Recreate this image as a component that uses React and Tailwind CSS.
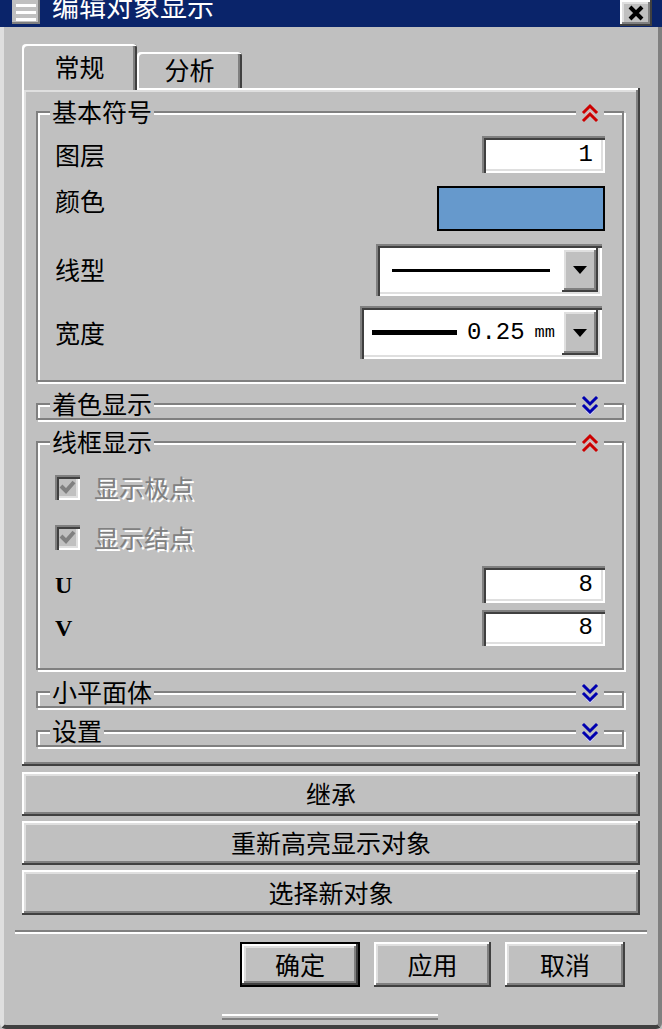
import React from 'react';

const cjk = "font-['Noto_Sans_CJK_SC','Noto_Sans_CJK_JP',sans-serif]";
const mono = "font-['Liberation_Mono','DejaVu_Sans_Mono',monospace]";
const serif = "font-['Liberation_Serif',serif]";

const raised =
  'bg-[#c0c0c0] shadow-[inset_-2px_-2px_0_#404040,inset_2px_2px_0_#ffffff,inset_-4px_-4px_0_#808080,inset_4px_4px_0_#dfdfdf]';
const sunken =
  'shadow-[inset_2px_2px_0_#808080,inset_4px_4px_0_#404040,inset_-2px_-2px_0_#ffffff,inset_-4px_-4px_0_#dfdfdf]';

const Chevrons = ({ up }) => (
  <svg width="20" height="22" viewBox="0 0 20 22">
    {up ? (
      <g fill="none" strokeWidth="3" strokeLinecap="square">
        <polyline points="4,10 10,4 16,10" stroke="#cc0000" />
        <polyline points="4,18 10,12 16,18" stroke="#cc0000" />
        <polyline points="6,13 10,9 14,13" stroke="#ffb0b0" strokeWidth="1" />
      </g>
    ) : (
      <g fill="none" strokeWidth="3" strokeLinecap="square">
        <polyline points="4,4 10,10 16,4" stroke="#0000b0" />
        <polyline points="4,12 10,18 16,12" stroke="#0000b0" />
        <polyline points="6,17 10,21 14,17" stroke="#c8c8ff" strokeWidth="1" />
      </g>
    )}
  </svg>
);

// etched group box with legend-like title sitting on the top line
const Group = ({ title, open, className = '', children }) => (
  <div className={`relative border-2 border-[#808080] shadow-[inset_2px_2px_0_#ffffff,2px_2px_0_#ffffff] ${className}`}>
    <span className="absolute left-[12px] -top-[16px] bg-[#c0c0c0] px-[2px] text-[25px] leading-[28px] text-black">
      {title}
    </span>
    <span className="absolute right-[18px] -top-[11px] bg-[#c0c0c0] px-[4px] flex">
      <Chevrons up={open} />
    </span>
    {children}
  </div>
);

const Field = ({ value, w }) => (
  <div className={`${w} h-full bg-white ${sunken} flex items-center justify-end pr-[12px]`}>
    <span className={`${mono} text-[24px] text-black`}>{value}</span>
  </div>
);

const DropBtn = () => (
  <div className={`w-[36px] h-full ${raised} flex items-center justify-center`}>
    <svg width="14" height="8" viewBox="0 0 14 8">
      <polygon points="0,0 14,0 7,8" fill="#000" />
    </svg>
  </div>
);

const Check = ({ label }) => (
  <div className="flex items-center h-[27px]">
    <div className={`w-[25px] h-[25px] bg-[#c0c0c0] ${sunken} flex items-center justify-center`}>
      <svg width="17" height="15" viewBox="0 0 17 15">
        <polyline points="2,6 7,11 15,2" fill="none" stroke="#808080" strokeWidth="4" />
      </svg>
    </div>
    <span className="ml-[14px] text-[25px] leading-none text-[#808080] [text-shadow:2px_2px_0_#ffffff]">{label}</span>
  </div>
);

const Button = ({ children, className = '' }) => (
  <div className={`${raised} flex items-center justify-center text-[25px] text-black ${className}`}>{children}</div>
);

export default function App() {
  return (
    <div className={`w-[662px] h-[1029px] bg-[#c0c0c0] flex flex-col overflow-hidden ${cjk}`}>
      {/* title bar */}
      <div className="h-[27px] bg-[#0a246a] flex items-start overflow-hidden shrink-0">
        <div className="ml-[12px] w-[28px] h-[24px] bg-[#c0c0c0] flex flex-col justify-center gap-[4px] px-[4px] shadow-[inset_-2px_-2px_0_#808080]">
          <div className="h-[3px] bg-white" />
          <div className="h-[3px] bg-white" />
          <div className="h-[3px] bg-white" />
        </div>
        <span className="ml-[12px] -mt-[10px] text-[27px] leading-[32px] text-white">编辑对象显示</span>
        <div className={`ml-auto mr-[10px] w-[32px] h-[26px] ${raised} flex items-center justify-center`}>
          <svg width="16" height="16" viewBox="0 0 16 16">
            <path d="M2 2 L14 14 M14 2 L2 14" stroke="#000" strokeWidth="4" />
          </svg>
        </div>
      </div>

      {/* window body */}
      <div className="flex-1 flex flex-col border-l-[4px] border-[#dfdfdf] border-r-[4px] border-r-[#808080] border-b-[4px] border-b-[#404040] rounded-b-[6px]">
        <div className="pl-[18px] pr-[18px] flex flex-col">
          {/* tabs */}
          <div className="mt-[17px] flex items-end h-[44px]">
            <div className="relative z-10 -mb-[2px] w-[115px] h-[46px] bg-[#c0c0c0] rounded-t-[4px] shadow-[inset_2px_2px_0_#ffffff,inset_-2px_0_0_#404040,inset_-4px_0_0_#808080] flex items-center justify-center text-[25px] text-black">
              常规
            </div>
            <div className="w-[105px] h-[36px] bg-[#c0c0c0] rounded-t-[4px] shadow-[inset_2px_2px_0_#ffffff,inset_-2px_0_0_#404040,inset_-4px_0_0_#808080] flex items-center justify-center text-[25px] text-black">
              分析
            </div>
          </div>

          {/* tab page */}
          <div className={`h-[678px] ${raised} pl-[14px] pr-[16px] pt-[23px] flex flex-col`}>
            <Group title="基本符号" open className="h-[271px] pl-[17px] pr-[17px] pt-[23px]">
              <div className="flex items-center justify-between h-[37px]">
                <span className="text-[25px] text-black">图层</span>
                <Field value="1" w="w-[123px]" />
              </div>
              <div className="mt-[13px] flex items-start justify-between h-[45px]">
                <span className="text-[25px] leading-[28px] text-black">颜色</span>
                <div className="w-[168px] h-full bg-[#6699cc] border-2 border-black" />
              </div>
              <div className="mt-[13px] flex items-center justify-between h-[52px]">
                <span className="text-[25px] text-black">线型</span>
                <div className={`mr-[3px] w-[226px] h-full bg-white ${sunken} p-[4px] flex`}>
                  <div className="flex-1 flex items-center justify-center">
                    <div className="w-[158px] h-[3px] bg-black" />
                  </div>
                  <DropBtn />
                </div>
              </div>
              <div className="mt-[10px] flex items-center justify-between h-[53px]">
                <span className="text-[25px] text-black">宽度</span>
                <div className={`mr-[3px] w-[242px] h-full bg-white ${sunken} p-[4px] flex`}>
                  <div className="flex-1 flex items-center pl-[8px]">
                    <div className="w-[85px] h-[5px] bg-black" />
                    <span className={`${mono} ml-[10px] text-[24px] text-black`}>0.25</span>
                    <span className={`${mono} ml-[10px] text-[17px] text-black`}>mm</span>
                  </div>
                  <DropBtn />
                </div>
              </div>
            </Group>

            <Group title="着色显示" className="mt-[21px] h-[17px]" />

            <Group title="线框显示" open className="mt-[21px] h-[229px] pl-[17px] pr-[17px] pt-[31px]">
              <Check label="显示极点" />
              <div className="mt-[23px]">
                <Check label="显示结点" />
              </div>
              <div className="mt-[15px] flex items-center justify-between h-[37px]">
                <span className={`${serif} font-bold text-[24px] text-black`}>U</span>
                <Field value="8" w="w-[123px]" />
              </div>
              <div className="mt-[7px] flex items-center justify-between h-[36px]">
                <span className={`${serif} font-bold text-[24px] text-black`}>V</span>
                <Field value="8" w="w-[123px]" />
              </div>
            </Group>

            <Group title="小平面体" className="mt-[21px] h-[17px]" />
            <Group title="设置" className="mt-[22px] h-[17px]" />
          </div>

          {/* action buttons */}
          <Button className="mt-[6px] h-[44px]">继承</Button>
          <Button className="mt-[5px] h-[44px]">重新高亮显示对象</Button>
          <Button className="mt-[5px] h-[45px]">选择新对象</Button>
        </div>

        <div className="mx-[11px] mt-[15px] h-[4px] border-t-2 border-[#808080] border-b-2 border-b-white" />

        <div className="mt-[8px] flex justify-end gap-[14px] pr-[33px]">
          <div className="w-[120px] h-[45px] border-2 border-black">
            <Button className="w-full h-full">确定</Button>
          </div>
          <Button className="w-[117px] h-[45px]">应用</Button>
          <Button className="w-[120px] h-[45px]">取消</Button>
        </div>

        <div className="mt-[27px] ml-[218px] w-[216px] h-[6px] border-t-2 border-white border-b-2 border-b-[#808080]" />
      </div>
    </div>
  );
}
